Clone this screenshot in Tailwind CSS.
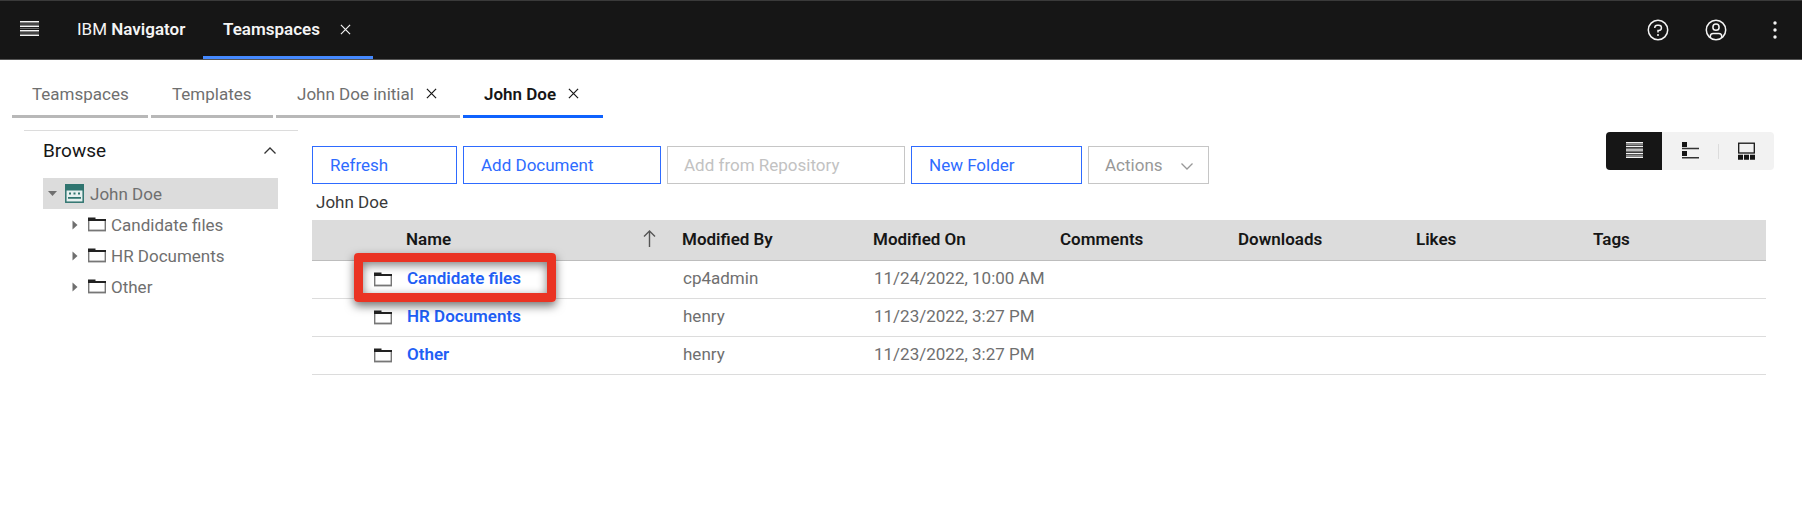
<!DOCTYPE html>
<html lang="en">
<head>
<meta charset="utf-8">
<meta name="viewport" content="width=device-width, initial-scale=1">
<title>IBM Navigator - Teamspaces</title>
<script src="https://cdn.jsdelivr.net/npm/@tailwindcss/browser@4"></script>
</head>
<body class="min-h-screen bg-white font-[Roboto,'Liberation_Sans',sans-serif] text-[17px] leading-6 text-[#6f6f6f]">
<svg class="hidden" aria-hidden="true">
  <symbol id="close" viewBox="0 0 12 12"><path d="M1 1l10 10M11 1L1 11" fill="none" stroke="currentColor" stroke-width="1.300"/></symbol>
  <symbol id="folder" viewBox="0 0 18 15"><path d="M.7 3v10.500M17.300 3v10.500" fill="none" stroke="#777" stroke-width="1.400"/><path d="M0 13.500h18" stroke="#777" stroke-width="1.800"/><path d="M0 .5h7.500v1.500H18V4H0z" fill="#222"/></symbol>
  <symbol id="caret" viewBox="0 0 6 10"><path d="M0.500 0.500L5.500 5L0.500 9.500z" fill="#6f6f6f"/></symbol>
</svg>

<header class="flex h-[60px] items-stretch border-y border-t-[#3a3a3a] border-b-[#555] bg-[#161616] text-[#f4f4f4]">
  <button class="flex items-center pb-[3px] pl-5" aria-label="Menu">
    <svg class="h-[15px] w-[19px]" viewBox="0 0 19 15"><path d="M0 .8h19M0 5.200h19M0 9.700h19M0 14.200h19" stroke="#f4f4f4" stroke-width="1.400"/><path d="M0 3h19M0 7.400h19M0 12h19" stroke="#8d8d8d" stroke-width=".8"/></svg>
  </button>
  <a href="#" class="flex w-[164px] items-center pb-[3px] pl-[38px] whitespace-pre"><span>IBM <b class="font-semibold">Navigator</b></span></a>
  <div class="flex w-[170px] items-center gap-5 border-b-[3px] border-[#4589ff] pt-px pl-5">
    <a href="#" class="font-semibold">Teamspaces</a>
    <button aria-label="Close Teamspaces"><svg class="size-[11px]"><use href="#close"/></svg></button>
  </div>
  <div class="ml-auto flex items-center pr-[25px] pb-px">
    <button aria-label="Help"><svg class="size-[22px]" viewBox="0 0 22 22" fill="none" stroke="#f4f4f4" stroke-width="1.500"><circle cx="11" cy="11" r="9.700"/><path d="M7.800 9V8.500A2.400 2.400 0 0 1 10.200 6.200h1.600a2.400 2.400 0 0 1 0 5.300H11v2"/><circle cx="11" cy="16" r="1" fill="#f4f4f4" stroke="none"/></svg></button>
    <button class="ml-9" aria-label="User profile"><svg class="size-[22px]" viewBox="0 0 22 22" fill="none" stroke="#f4f4f4" stroke-width="1.500"><circle cx="11" cy="11" r="9.700"/><circle cx="11" cy="8.200" r="3.100"/><path d="M5.300 18.500v-1.200a2.800 2.800 0 0 1 2.800-2.800h5.800a2.800 2.800 0 0 1 2.800 2.800v1.200"/></svg></button>
    <button class="ml-[46px]" aria-label="More options"><svg class="h-5 w-1" viewBox="0 0 4 20" fill="#f4f4f4"><circle cx="2" cy="3" r="1.700"/><circle cx="2" cy="10" r="1.700"/><circle cx="2" cy="17" r="1.700"/></svg></button>
  </div>
</header>

<nav class="flex h-[58px] gap-[3px] pl-3" aria-label="Open teamspaces">
  <a href="#" class="flex w-[136px] items-center border-b-[3px] border-[#b8b8b8] pt-3 pl-5">Teamspaces</a>
  <a href="#" class="flex w-[122px] items-center border-b-[3px] border-[#b8b8b8] pt-3 pl-[21px]">Templates</a>
  <div class="flex w-[184px] items-center gap-3 border-b-[3px] border-[#b8b8b8] pt-3 pl-[21px]">
    <a href="#" class="whitespace-nowrap">John Doe initial</a>
    <button class="text-[#161616]" aria-label="Close John Doe initial"><svg class="size-[11px]"><use href="#close"/></svg></button>
  </div>
  <div class="flex w-[140px] items-center gap-3 border-b-[3px] border-[#0f62fe] pt-3 pl-[21px] text-[#161616]">
    <a href="#" class="font-semibold whitespace-nowrap">John Doe</a>
    <button aria-label="Close John Doe"><svg class="size-[11px]"><use href="#close"/></svg></button>
  </div>
</nav>

<div class="flex gap-[14px] pr-7 pl-6">
  <aside class="mt-3 w-[274px] shrink-0 border-t border-[#dcdcdc] pr-5 pl-[19px]">
    <div class="flex h-[47px] items-start justify-between pt-2">
      <h2 class="text-[19px] text-[#161616]">Browse</h2>
      <button class="mt-2 mr-0.5 flex" aria-label="Collapse Browse"><svg class="h-[7px] w-3 overflow-visible" viewBox="0 0 12 7"><path d="M0.500 6.500L6 1l5.500 5.500" fill="none" stroke="#333" stroke-width="1.300"/></svg></button>
    </div>
    <ul>
      <li>
        <a href="#" class="flex h-[31px] items-center bg-[#dcdcdc] pl-[5px]">
          <svg class="h-[5px] w-[9px]" viewBox="0 0 9 5"><path d="M0 0h9L4.500 5z" fill="#6f6f6f"/></svg>
          <svg class="ml-2 h-[19px] w-[19px]" viewBox="0 0 19 19"><rect x=".8" y=".8" width="17.400" height="17.400" fill="#e6f0ef" stroke="#2f746f" stroke-width="1.500"/><path d="M0 0h19v6.500H0z" fill="#2f746f"/><path d="M4 8.500h2v2h-2zM8.500 8.500h2v2h-2zM13 8.500h2v2h-2zM3 13h13v1.800H3z" fill="#2f746f"/></svg>
          <span class="ml-[6px]">John Doe</span>
        </a>
        <ul>
          <li><a href="#" class="flex h-[31px] items-center pl-[29px]"><svg class="h-2.5 w-1.5"><use href="#caret"/></svg><svg class="ml-2.5 h-[15px] w-[18px]"><use href="#folder"/></svg><span class="ml-[5px]">Candidate files</span></a></li>
          <li><a href="#" class="flex h-[31px] items-center pl-[29px]"><svg class="h-2.5 w-1.5"><use href="#caret"/></svg><svg class="ml-2.5 h-[15px] w-[18px]"><use href="#folder"/></svg><span class="ml-[5px]">HR Documents</span></a></li>
          <li><a href="#" class="flex h-[31px] items-center pl-[29px]"><svg class="h-2.5 w-1.5"><use href="#caret"/></svg><svg class="ml-2.5 h-[15px] w-[18px]"><use href="#folder"/></svg><span class="ml-[5px]">Other</span></a></li>
        </ul>
      </li>
    </ul>
  </aside>

  <main class="min-w-0 flex-1 pt-[14px]">
    <div class="flex items-start justify-between">
      <div class="flex gap-[6px] pt-[14px] text-[#2e6bff]">
        <button class="h-[38px] w-[145px] border border-[#2e6bff] pl-[17px] text-left">Refresh</button>
        <button class="h-[38px] w-[198px] border border-[#2e6bff] pl-[17px] text-left">Add Document</button>
        <button disabled class="h-[38px] w-[238px] border border-[#c6c6c6] pl-4 text-left text-[#c2c2c2]">Add from Repository</button>
        <button class="h-[38px] w-[171px] border border-[#2e6bff] pl-[17px] text-left">New Folder</button>
        <button class="flex h-[38px] w-[121px] items-center justify-between border border-[#c6c6c6] pr-[15px] pl-4 text-[#989898]" aria-haspopup="menu">Actions
          <svg class="mt-0.5 h-[7px] w-3 overflow-visible" viewBox="0 0 12 7"><path d="M0.500 .5L6 6l5.500-5.500" fill="none" stroke="#989898" stroke-width="1.300"/></svg></button>
      </div>
      <div class="flex h-[38px] overflow-hidden rounded-[4px] bg-[#f2f2f2]" role="group" aria-label="View">
        <button class="flex w-14 items-center justify-center bg-[#161616] pb-0.5" aria-label="Details view" aria-pressed="true"><svg class="h-4 w-[17px]" viewBox="0 0 17 16"><path d="M0 .8h17M0 4.400h17M0 8h17M0 11.600h17M0 15.200h17" stroke="#f4f4f4" stroke-width="1.400"/><path d="M0 2.600h17M0 6.200h17M0 9.800h17M0 13.400h17" stroke="#a8a8a8" stroke-width=".9"/></svg></button>
        <button class="flex w-14 items-center justify-center pb-0.5" aria-label="List view"><svg class="h-[17px] w-[17px]" viewBox="0 0 17 17"><path d="M0 0h5v5H0zM0 9h5v5H0z" fill="#161616"/><path d="M0 6.500h17M0 15.800h17" stroke="#333" stroke-width="1.400"/></svg></button>
        <button class="flex w-14 items-center" aria-label="Filmstrip view"><span class="h-[15px] w-px bg-[#dcdcdc]"></span><svg class="ml-[19px] h-[18px] w-[17px]" viewBox="0 0 17 18"><rect x=".7" y="1.200" width="15.600" height="9.800" fill="none" stroke="#161616" stroke-width="1.300"/><path d="M0 12.800h5v5H0zM6 12.800h5v5H6zM12 12.800h5v5h-5z" fill="#161616"/></svg></button>
      </div>
    </div>
    <p class="pl-1 leading-9 text-[#393939]">John Doe</p>

    <div class="pr-2">
      <table class="w-full table-fixed border-collapse text-left">
        <colgroup><col class="w-[94px]"><col class="w-[276px]"><col class="w-[191px]"><col class="w-[187px]"><col class="w-[178px]"><col class="w-[178px]"><col class="w-[177px]"><col></colgroup>
        <thead class="bg-[#dcdcdc] text-[#161616]">
          <tr class="h-10 border-b border-[#bdbdbd]">
            <th></th>
            <th class="pr-[26px] pb-0.5 font-semibold" aria-sort="ascending"><div class="flex items-center justify-between">Name<svg class="h-[17px] w-[13px]" viewBox="0 0 13 17"><path d="M6.500 17V1M1 6.500L6.500 1L12 6.500" fill="none" stroke="#555" stroke-width="1.400"/></svg></div></th>
            <th class="pb-0.5 font-semibold">Modified By</th>
            <th class="pb-0.5 font-semibold">Modified On</th>
            <th class="pb-0.5 font-semibold">Comments</th>
            <th class="pb-0.5 font-semibold">Downloads</th>
            <th class="pb-0.5 font-semibold">Likes</th>
            <th class="pb-0.5 font-semibold">Tags</th>
          </tr>
        </thead>
        <tbody>
          <tr class="h-[38px] border-b border-[#dcdcdc]">
            <td class="relative pl-[62px]"><svg class="h-[15px] w-[18px]"><use href="#folder"/></svg><span class="pointer-events-none absolute -top-2 left-[42px] h-[49px] w-[202px] rounded-[4px] border-[9px] border-[#ea3323] shadow-[0_4px_10px_rgba(0,0,0,0.55),inset_0_3px_10px_rgba(0,0,0,0.5)]"></span></td>
            <td class="pb-0.5 pl-px"><a href="#" class="font-semibold text-[#1f5ff5]">Candidate files</a></td><td class="pb-0.5 pl-px">cp4admin</td><td class="pb-0.5 pl-px">11/24/2022, 10:00 AM</td><td></td><td></td><td></td><td></td>
          </tr>
          <tr class="h-[38px] border-b border-[#dcdcdc]">
            <td class="pl-[62px]"><svg class="h-[15px] w-[18px]"><use href="#folder"/></svg></td>
            <td class="pb-0.5 pl-px"><a href="#" class="font-semibold text-[#1f5ff5]">HR Documents</a></td><td class="pb-0.5 pl-px">henry</td><td class="pb-0.5 pl-px">11/23/2022, 3:27 PM</td><td></td><td></td><td></td><td></td>
          </tr>
          <tr class="h-[38px] border-b border-[#dcdcdc]">
            <td class="pl-[62px]"><svg class="h-[15px] w-[18px]"><use href="#folder"/></svg></td>
            <td class="pb-0.5 pl-px"><a href="#" class="font-semibold text-[#1f5ff5]">Other</a></td><td class="pb-0.5 pl-px">henry</td><td class="pb-0.5 pl-px">11/23/2022, 3:27 PM</td><td></td><td></td><td></td><td></td>
          </tr>
        </tbody>
      </table>
    </div>
  </main>
</div>
</body>
</html>
